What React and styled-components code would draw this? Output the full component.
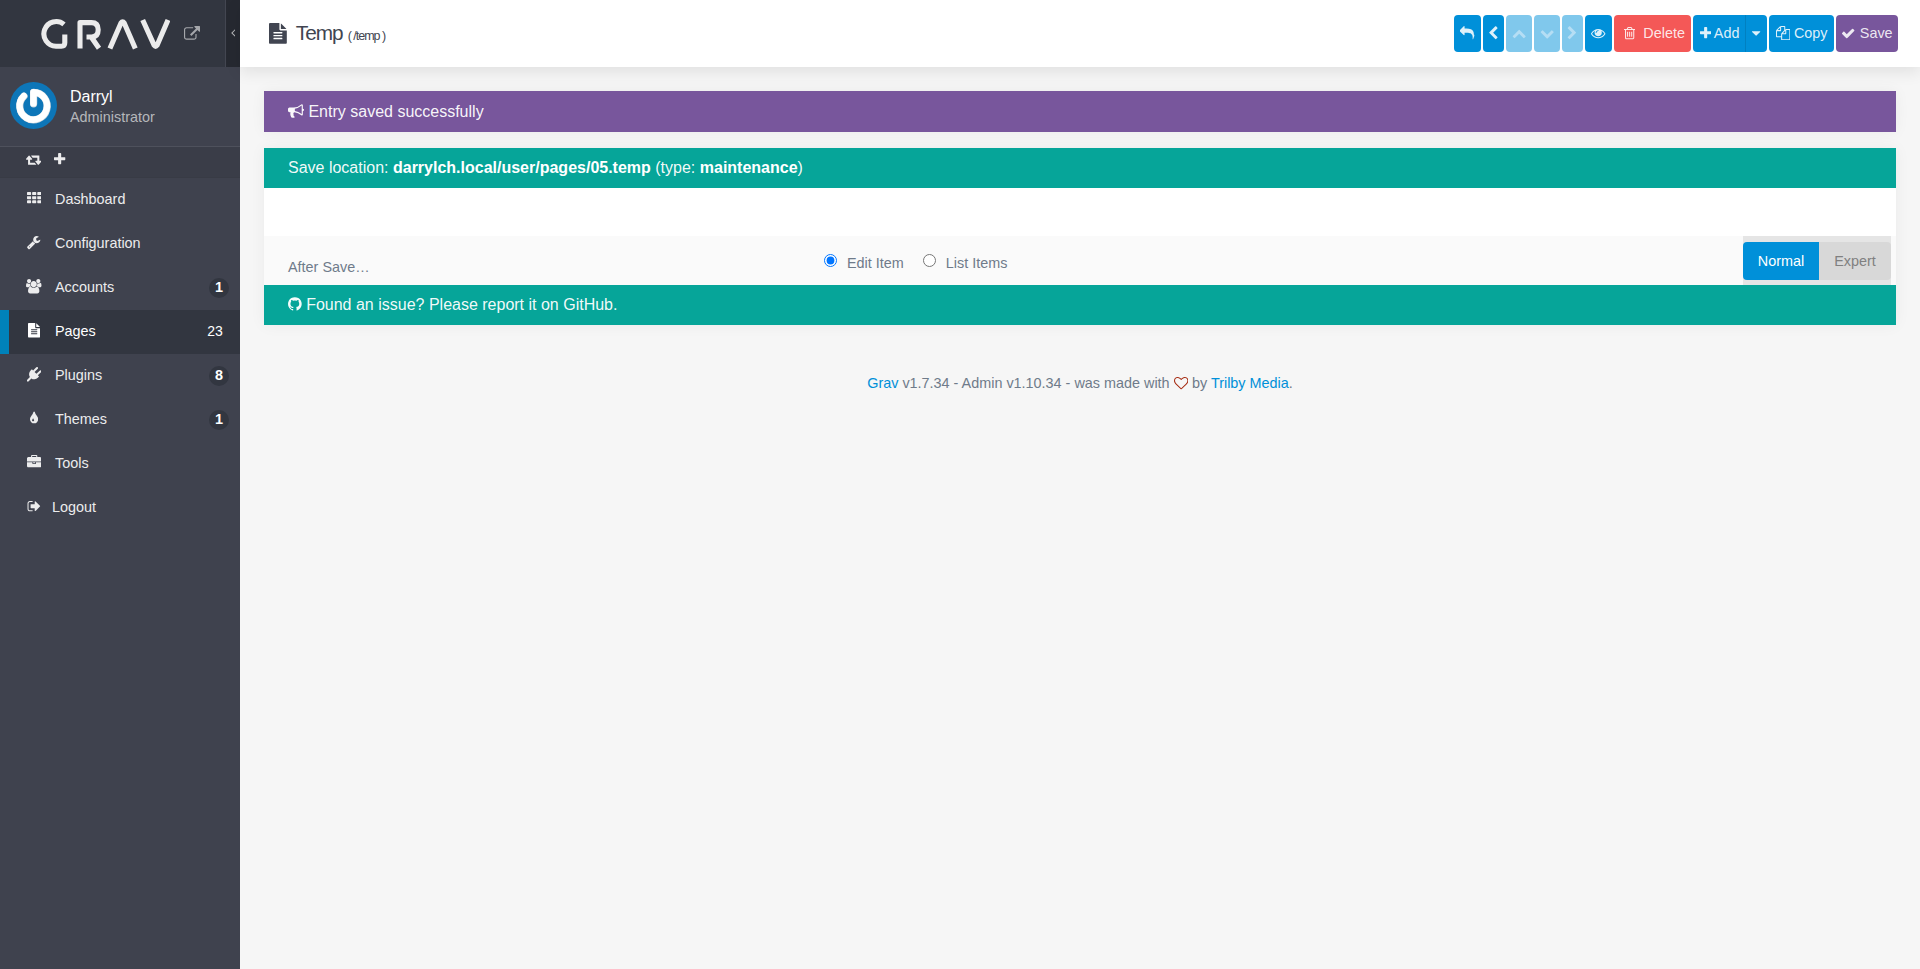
import React from 'react'
import styled, { createGlobalStyle, css } from 'styled-components'

const GlobalStyle = createGlobalStyle`
  * {
    box-sizing: border-box;
  }
  body {
    margin: 0;
    background: #f6f6f6;
    color: #6f7b8a;
    font-family: "Liberation Sans", Arial, sans-serif;
    font-size: 16px;
    line-height: 24px;
  }
`

// x offset, advance width and outline of each icon, on a 1792 unit em
const ICONS = {
  reply: [0, 1792, 'M1792 1120q0 166-127 451-3 7-10.5 24t-13.5 30-13 22q-12 17-28 17-15 0-23.5-10t-8.5-25q0-9 2.5-26.5t2.5-23.5q5-68 5-123 0-112-19.5-200.5t-54-153.5-89-112-117-77-145.5-47-167.5-24-189.5-7h-224v256q0 26-19 45t-45 19-45-19l-512-512q-19-19-19-45t19-45l512-512q19-19 45-19t45 19 19 45v256h224q713 0 875 403 53 134 53 333z'],
  left: [256, 1280, 'M1427 301l-531 531 531 531q19 19 19 45t-19 45l-166 166q-19 19-45 19t-45-19l-742-742q-19-19-19-45t19-45l742-742q19-19 45-19t45 19l166 166q19 19 19 45t-19 45z'],
  right: [256, 1280, 'M1363 877l-742 742q-19 19-45 19t-45-19l-166-166q-19-19-19-45t19-45l531-531-531-531q-19-19-19-45t19-45l166-166q19-19 45-19t45 19l742 742q19 19 19 45t-19 45z'],
  down: [0, 1792, 'M1683 808l-742 741q-19 19-45 19t-45-19l-742-741q-19-19-19-45.5t19-45.5l166-165q19-19 45-19t45 19l531 531 531-531q19-19 45-19t45 19l166 165q19 19 19 45.5t-19 45.5z'],
  up: [0, 1792, 'M1683 1331l-166 165q-19 19-45 19t-45-19l-531-531-531 531q-19 19-45 19t-45-19l-166-165q-19-19-19-45.5t19-45.5l742-741q19-19 45-19t45 19l742 741q19 19 19 45.5t-19 45.5z'],
  eye: [0, 1792, 'M1664 960q-152-236-381-353 61 104 61 225 0 185-131.5 316.5t-316.5 131.5-316.5-131.5-131.5-316.5q0-121 61-225-229 117-381 353 133 205 333.5 326.5t434.5 121.5 434.5-121.5 333.5-326.5zm-720-384q0-20-14-34t-34-14q-125 0-214.5 89.5t-89.5 214.5q0 20 14 34t34 14 34-14 14-34q0-86 61-147t147-61q20 0 34-14t14-34zm848 384q0 34-20 69-140 230-376.5 368.5t-499.5 138.5-499.5-139-376.5-368q-20-35-20-69t20-69q140-229 376.5-368t499.5-139 499.5 139 376.5 368q20 35 20 69z'],
  trash: [192, 1408, 'M704 736v576q0 14-9 23t-23 9h-64q-14 0-23-9t-9-23v-576q0-14 9-23t23-9h64q14 0 23 9t9 23zm256 0v576q0 14-9 23t-23 9h-64q-14 0-23-9t-9-23v-576q0-14 9-23t23-9h64q14 0 23 9t9 23zm256 0v576q0 14-9 23t-23 9h-64q-14 0-23-9t-9-23v-576q0-14 9-23t23-9h64q14 0 23 9t9 23zm128 724v-948h-896v948q0 22 7 40.5t14.5 27 10.5 8.5h832q3 0 10.5-8.5t14.5-27 7-40.5zm-672-1076h448l-48-117q-7-9-17-11h-317q-10 2-17 11zm928 32v64q0 14-9 23t-23 9h-96v948q0 83-47 143.5t-113 60.5h-832q-66 0-113-58.5t-47-141.5v-952h-96q-14 0-23-9t-9-23v-64q0-14 9-23t23-9h309l70-167q15-37 54-63t79-26h320q40 0 79 26t54 63l70 167h309q14 0 23 9t9 23z'],
  plus: [192, 1408, 'M1600 736v192q0 40-28 68t-68 28h-416v416q0 40-28 68t-68 28h-192q-40 0-68-28t-28-68v-416h-416q-40 0-68-28t-28-68v-192q0-40 28-68t68-28h416v-416q0-40 28-68t68-28h192q40 0 68 28t28 68v416h416q40 0 68 28t28 68z'],
  caret: [384, 1024, 'M1408 704q0 26-19 45l-448 448q-19 19-45 19t-45-19l-448-448q-19-19-19-45t19-45 45-19h896q26 0 45 19t19 45z'],
  copy: [0, 1792, 'M1696 384q40 0 68 28t28 68v1216q0 40-28 68t-68 28h-960q-40 0-68-28t-28-68v-288h-544q-40 0-68-28t-28-68v-672q0-40 20-88t48-76l408-408q28-28 76-48t88-20h416q40 0 68 28t28 68v328q68-40 128-40h416zm-544 213l-299 299h299v-299zm-640-384l-299 299h299v-299zm196 647l316-316v-416h-384v416q0 40-28 68t-68 28h-416v640h512v-256q0-40 20-88t48-76zm956 804v-1152h-384v416q0 40-28 68t-68 28h-416v640h896z'],
  check: [0, 1792, 'M1671 566q0 40-28 68l-724 724-136 136q-28 28-68 28t-68-28l-136-136-362-362q-28-28-28-68t28-68l136-136q28-28 68-28t68 28l294 295 656-657q28-28 68-28t68 28l136 136q28 28 28 68z'],
  external: [0, 1792, 'M1408 928v320q0 119-84.5 203.5t-203.5 84.5h-832q-119 0-203.5-84.5t-84.5-203.5v-832q0-119 84.5-203.5t203.5-84.5h704q14 0 23 9t9 23v64q0 14-9 23t-23 9h-704q-66 0-113 47t-47 113v832q0 66 47 113t113 47h832q66 0 113-47t47-113v-320q0-14 9-23t23-9h64q14 0 23 9t9 23zm384-864v512q0 26-19 45t-45 19-45-19l-176-176-652 652q-10 10-23 10t-23-10l-114-114q-10-10-10-23t10-23l652-652-176-176q-19-19-19-45t19-45 45-19h512q26 0 45 19t19 45z'],
  retweet: [-64, 1920, 'M1216 1568q0 13-9.5 22.5t-22.5 9.5h-960q-8 0-13.5-2t-9-7-5.5-8-3-11.5-1-11.5v-600h-192q-26 0-45-19t-19-45q0-24 15-41l320-384q19-22 49-22t49 22l320 384q15 17 15 41 0 26-19 45t-45 19h-192v384h576q16 0 25 11l160 192q7 10 7 21zm640-416q0 24-15 41l-320 384q-20 23-49 23t-49-23l-320-384q-15-17-15-41 0-26 19-45t45-19h192v-384h-576q-16 0-25-12l-160-192q-7-9-7-20 0-13 9.5-22.5t22.5-9.5h960q8 0 13.5 2t9 7 5.5 8 3 11.5 1 11.5v600h192q26 0 45 19t19 45z'],
  th: [0, 1792, [1152, 640, 128].map(y => [0, 640, 1280].map(x => `M${x + 512} ${y + 96}v192q0 40-28 68t-68 28h-320q-40 0-68-28t-28-68v-192q0-40 28-68t68-28h320q40 0 68 28t28 68z`).join('')).join('')],
  wrench: [64, 1664, 'M448 1472q0-26-19-45t-45-19-45 19-19 45 19 45 45 19 45-19 19-45zm644-420l-682 682q-37 37-90 37-52 0-91-37l-106-108q-38-36-38-90 0-53 38-91l681-681q39 98 114.5 173.5t173.5 114.5zm634-435q0 39-23 106-47 134-164.5 217.5t-258.5 83.5q-185 0-316.5-131.5t-131.5-316.5 131.5-316.5 316.5-131.5q58 0 121.5 16.5t107.5 46.5q16 11 16 28t-16 28l-293 169v224l193 107q5-3 79-48.5t135.5-81 70.5-35.5q15 0 23.5 10t8.5 25z'],
  users: [0, 1920, 'M593 896q-162 5-265 128h-134q-82 0-138-40.5t-56-118.5q0-353 124-353 6 0 43.5 21t97.5 42.5 119 21.5q67 0 133-23-5 37-5 66 0 159 93 293zm1071 637q0 120-73 189.5t-194 69.5h-874q-121 0-194-69.5t-73-189.5q0-53 3.5-103.5t14-109 26.5-108.5 43-97.5 62-81 85.5-53.5 111.5-20q10 0 43 21.5t73 48 107 48 135 21.5 135-21.5 107-48 73-48 43-21.5q61 0 111.5 20t85.5 53.5 62 81 43 97.5 26.5 108.5 14 109 3.5 103.5zm-1024-1277q0 106-75 181t-181 75-181-75-75-181 75-181 181-75 181 75 75 181zm704 384q0 159-112.5 271.5t-271.5 112.5-271.5-112.5-112.5-271.5 112.5-271.5 271.5-112.5 271.5 112.5 112.5 271.5zm576 225q0 78-56 118.5t-138 40.5h-134q-103-123-265-128 93-134 93-293 0-29-5-66 66 23 133 23 59 0 119-21.5t97.5-42.5 43.5-21q124 0 124 353zm-128-609q0 106-75 181t-181 75-181-75-75-181 75-181 181-75 181 75 75 181z'],
  file: [128, 1536, 'M1596 476q14 14 28 36h-472v-472q22 14 36 28zm-476 164h544v1056q0 40-28 68t-68 28h-1344q-40 0-68-28t-28-68v-1600q0-40 28-68t68-28h800v544q0 40 28 68t68 28zm160 736v-64q0-14-9-23t-23-9h-704q-14 0-23 9t-9 23v64q0 14 9 23t23 9h704q14 0 23-9t9-23zm0-256v-64q0-14-9-23t-23-9h-704q-14 0-23 9t-9 23v64q0 14 9 23t23 9h704q14 0 23-9t9-23zm0-256v-64q0-14-9-23t-23-9h-704q-14 0-23 9t-9 23v64q0 14 9 23t23 9h704q14 0 23-9t9-23z'],
  plug: [0, 1792, 'M1755 453q37 38 37 90.5t-37 90.5l-401 400 150 150-160 160q-163 163-389.5 186.5t-411.5-100.5l-362 362h-181v-181l362-362q-124-185-100.5-411.5t186.5-389.5l160-160 150 150 400-401q38-37 91-37t90 37 37 90.5-37 90.5l-400 401 234 234 401-400q38-37 91-37t90 37z'],
  tint: [384, 1024, 'M896 1152q0-36-20-69-1-1-15.5-22.5t-25.5-38-25-44-21-50.5q-4-16-21-16t-21 16q-7 23-21 50.5t-25 44-25.5 38-15.5 22.5q-20 33-20 69 0 53 37.5 90.5t90.5 37.5 90.5-37.5 37.5-90.5zm512-128q0 212-150 362t-362 150-362-150-150-362q0-145 81-275 6-9 62.5-90.5t101-151 99.5-178 83-201.5q9-30 34-47t51-17 51.5 17 33.5 47q28 93 83 201.5t99.5 178 101 151 62.5 90.5q81 127 81 275z'],
  briefcase: [0, 1792, 'M640 256h512v-128h-512v128zm1152 640v480q0 66-47 113t-113 47h-1472q-66 0-113-47t-47-113v-480h672v160q0 26 19 45t45 19h320q26 0 45-19t19-45v-160h672zm-768 0v128h-256v-128h256zm768-480v384h-1792v-384q0-66 47-113t113-47h352v-160q0-40 28-68t68-28h576q40 0 68 28t28 68v160h352q66 0 113 47t47 113z'],
  signout: [0, 1664, 'M704 1440q0 4 1 20t.5 26.5-3 23.5-10 19.5-20.5 6.5h-320q-119 0-203.5-84.5t-84.5-203.5v-704q0-119 84.5-203.5t203.5-84.5h320q13 0 22.5 9.5t9.5 22.5q0 4 1 20t.5 26.5-3 23.5-10 19.5-20.5 6.5h-320q-66 0-113 47t-47 113v704q0 66 47 113t113 47h312l11.5 1 11.5 3 8 5.5 7 9 2 13.5zm928-544q0 26-19 45l-544 544q-19 19-45 19t-45-19-19-45v-288h-448q-26 0-45-19t-19-45v-384q0-26 19-45t45-19h448v-288q0-26 19-45t45-19 45 19l544 544q19 19 19 45z'],
  bullhorn: [0, 1792, 'M1664 640q53 0 90.5 37.5t37.5 90.5-37.5 90.5-90.5 37.5v384q0 52-38 90t-90 38q-417-347-812-380-58 19-91 66t-31 100.5 40 92.5q-20 33-23 65.5t6 58 33.5 55 48 50 61.5 50.5q-29 58-111.5 83t-168.5 11.5-132-55.5q-7-23-29.5-87.5t-32-94.5-23-89-15-101 3.5-98.5 22-110.5h-122q-66 0-113-47t-47-113v-192q0-66 47-113t113-47h480q435 0 896-384 52 0 90 38t38 90v384zm-128 604v-954q-394 302-768 343v270q377 42 768 341z'],
  github: [128, 1536, 'M896 128q209 0 385.5 103t279.5 279.5 103 385.5q0 251-146.5 451.5t-378.5 277.5q-27 5-40-7t-13-30q0-3 .5-76.5t.5-134.5q0-97-52-142 57-6 102.5-18t94-39 81-66.5 53-105 20.5-150.5q0-119-79-206 37-91-8-204-28-9-81 11t-92 44l-38 24q-93-26-192-26t-192 26q-16-11-42.5-27t-83.5-38.5-85-13.5q-45 113-8 204-79 87-79 206 0 85 20.5 150t52.5 105 80.5 67 94 39 102.5 18q-39 36-49 103-21 10-45 15t-57 5-65.5-21.5-55.5-62.5q-19-32-48.5-52t-49.5-24l-20-3q-21 0-29 4.5t-5 11.5 9 14 13 12l7 5q22 10 43.5 38t31.5 51l10 23q13 38 44 61.5t67 30 69.5 7 55.5-3.5l23-4q0 38 .5 88.5t.5 54.5q0 18-13 30t-40 7q-232-77-378.5-277.5t-146.5-451.5q0-209 103-385.5t279.5-279.5 385.5-103z'],
  heart: [0, 1792, 'M1664 596q0-81-21.5-143t-55-98.5-81.5-59.5-94-31-98-8-112 25.5-110.5 64-86.5 72-60 61.5q-18 22-49 22t-49-22q-24-28-60-61.5t-86.5-72-110.5-64-112-25.5-98 8-94 31-81.5 59.5-55 98.5-21.5 143q0 168 187 355l581 560 580-559q188-188 188-356zm128 0q0 221-229 450l-623 600q-18 18-44 18t-44-18l-624-602q-10-8-27.5-26t-55.5-65.5-68-97.5-53.5-121-23.5-138q0-220 127-344t351-124q62 0 126.5 21.5t120 58 95.5 68.5 76 68q36-36 76-68t95.5-68.5 120-58 126.5-21.5q224 0 351 124t127 344z'],
  angle: [576, 640, 'M1203 544q0 13-10 23l-393 393 393 393q10 10 10 23t-10 23l-50 50q-10 10-23 10t-23-10l-466-466q-10-10-10-23t10-23l466-466q10-10 23-10t23 10l50 50q10 10 10 23z']
}

const Svg = styled.svg`
  display: inline-block;
  flex: none;
  height: 1em;
  fill: currentColor;
  vertical-align: -0.143em;
`

const Icon = ({ name, ...rest }) => {
  const [x, width, d] = ICONS[name]
  return (
    <Svg viewBox={`${x} 0 ${width} 1792`} {...rest}>
      <path d={d} />
    </Svg>
  )
}

const Page = styled.div`
  display: flex;
  height: 969px;
  overflow: hidden;
`

const Sidebar = styled.aside`
  display: flex;
  flex-direction: column;
  flex: none;
  width: 240px;
  background: #3f424e;
  color: #ececed;
  font-size: 14.4px;
`

const Brand = styled.div`
  display: flex;
  height: 67px;
  background: #323640;
`

const BrandLink = styled.div`
  display: flex;
  flex: 1;
  align-items: center;
  gap: 14px;
  padding-left: 40px;
  color: #a5a7ab;
  font-size: 16px;
`

const LogoSvg = styled.svg`
  flex: none;
  width: 130px;
  height: 32px;
  fill: none;
  stroke: #ebebeb;
  stroke-width: 5.1;
  stroke-linejoin: round;
`

const Collapse = styled.div`
  display: flex;
  align-items: center;
  justify-content: center;
  width: 15px;
  padding-bottom: 2px;
  border-left: 1px solid #434651;
  background: #262931;
  color: #b3b4b7;
  font-size: 13px;
`

const Profile = styled.div`
  display: flex;
  gap: 13px;
  height: 80px;
  padding: 15px 10px 0;
  border-bottom: 1px solid #4e515c;
`

const AvatarSvg = styled.svg`
  width: 47px;
  height: 47px;
`

const Names = styled.div`
  padding-top: 3px;
`

const Name = styled.div`
  color: #fff;
  font-size: 16px;
  line-height: 24px;
`

const Role = styled.div`
  color: #b5b7bb;
  line-height: 17px;
`

const QuickTray = styled.div`
  display: flex;
  align-items: center;
  gap: 13px;
  height: 31px;
  padding: 0 0 5px 26px;
  border-bottom: 1px solid #383b45;
  background: #3a3d48;
`

const NavRow = styled.div`
  display: flex;
  align-items: center;
  height: 44px;
  padding: 0 11px 3px ${p => p.active ? 17 : 26}px;
  ${p => p.active && css`
    border-left: 9px solid #0082ba;
    background: #323640;
    color: #fff;
  `}
`

const NavIcon = styled.span`
  display: flex;
  justify-content: center;
  width: 16px;
  margin-right: ${p => p.tight ? 10 : 13}px;
`

const NavLabel = styled.span`
  flex: 1;
`

const Badge = styled.span`
  margin-top: 3px;
  min-width: 20px;
  height: 20px;
  border-radius: 10px;
  background: #323640;
  color: #fff;
  font-weight: 700;
  line-height: 19px;
  text-align: center;
  ${p => p.plain && css`
    margin-right: 4px;
    background: none;
    font-weight: 400;
    font-size: 14px;
    line-height: 18px;
  `}
`

const Main = styled.main`
  flex: 1;
  min-width: 0;
`

const TitleBar = styled.header`
  position: relative;
  display: flex;
  align-items: center;
  justify-content: space-between;
  height: 67px;
  padding: 0 22px 0 29px;
  background: #fff;
  box-shadow: 0 5px 15px rgba(0, 0, 0, 0.09);
`

const Title = styled.h1`
  display: flex;
  align-items: baseline;
  margin: 2px 0 0;
  color: #414551;
  font-size: 20.8px;
  font-weight: 400;
  letter-spacing: -1px;
  ${Svg} {
    align-self: center;
    margin: -2px 9px 0 0;
  }
`

const Route = styled.span`
  margin-left: 5px;
  font-size: 12.5px;
  letter-spacing: -1px;
`

const Toolbar = styled.div`
  display: flex;
  gap: 2px;
`

const BUTTON_COLORS = {
  blue: '#0090d9',
  red: '#f45857',
  purple: '#78569c'
}

const Button = styled.button`
  display: flex;
  align-items: center;
  justify-content: center;
  gap: ${p => p.gap || 3}px;
  width: ${p => p.w}px;
  height: 37px;
  padding: 0 0 1px ${p => p.inset || 0}px;
  border: 0;
  border-radius: 4px;
  background: ${p => BUTTON_COLORS[p.tone || 'blue']};
  color: rgba(255, 255, 255, 0.87);
  font: 14.4px "Liberation Sans", Arial, sans-serif;
  ${p => p.faded && css`
    background: #80c8ec;
    color: #b5def4;
  `}
`

const SplitButton = styled.div`
  display: flex;
  ${Button}:first-child {
    border-radius: 4px 0 0 4px;
  }
  ${Button}:last-child {
    border-left: 1px solid #0080c1;
    border-radius: 0 4px 4px 0;
  }
`

const Content = styled.div`
  padding: 24px 24px 0;
`

const Banner = styled.div`
  height: ${p => p.h || 40}px;
  padding: 0 24px;
  background: ${p => p.tone === 'purple' ? '#78569c' : '#06a599'};
  color: rgba(255, 255, 255, 0.96);
  line-height: ${p => p.lh || 40}px;
  b {
    color: #fff;
  }
`

const Shadowed = styled.div`
  margin-bottom: ${p => p.space || 0}px;
  box-shadow: 0 0 15px rgba(0, 0, 0, 0.05);
`

const Blank = styled.div`
  height: 48px;
  background: #fff;
`

const SaveRow = styled.div`
  display: flex;
  height: 49px;
  padding: 0 5px 0 24px;
  background: #fafafa;
  font-size: 14.4px;
`

const SaveLabel = styled.div`
  width: 534px;
  padding-top: 19px;
`

const Options = styled.div`
  display: flex;
  flex: 1;
  gap: 17px;
`

const Option = styled.label`
  display: flex;
  gap: 10px;
  padding-top: 15px;
  input {
    width: 13px;
    height: 13px;
    margin: 3px 0 0 2px;
  }
`

const ModeSwitch = styled.div`
  display: flex;
  padding: 6px 0 5px;
  background: #e5e5e5;
`

const Mode = styled.div`
  width: ${p => p.w}px;
  border-radius: ${p => p.on ? '4px 0 0 4px' : '0 4px 4px 0'};
  background: ${p => p.on ? '#0090d9' : '#d8d8d8'};
  color: ${p => p.on ? '#fff' : '#808080'};
  line-height: 38px;
  text-align: center;
`

const Footer = styled.footer`
  padding-top: 46px;
  font-size: 14.4px;
  text-align: center;
  a {
    color: #0090d9;
  }
`

const Heart = styled.span`
  color: #a5290f;
`

const Logo = () => (
  <LogoSvg viewBox="40 18 130 32">
    <path d="M64 24.4A12.3 12.3 0 1 0 56 46.2H61.5Q64.8 46.2 64.8 42.8V34.6" />
    <path d="M80 48.5V22.6H91.5Q98.2 22.6 98.2 29.8T91.5 37H86.5M91.2 37L99 48.2" />
    <path d="M109.9 48.6L121 22.9Q122.6 20.6 124.2 22.9L135.3 48.6" />
    <path d="M142.7 20L154.2 45.4Q155.6 47.4 157 45.4L168 20" />
  </LogoSvg>
)

const Avatar = () => (
  <AvatarSvg viewBox="0 0 47 47">
    <circle cx="23.5" cy="23.5" r="23.5" fill="#0d76b8" />
    <g fill="none" strokeLinecap="round" strokeLinejoin="round">
      <path d="M23.6 21.8V10.4A13.7 13.7 0 1 1 14 14.2" stroke="#c9d3da" strokeWidth="7.2" />
      <path d="M23.4 21.4V10.2A13.7 13.7 0 1 1 13.8 14" stroke="#fff" strokeWidth="6.4" />
    </g>
  </AvatarSvg>
)

const NAV = [
  { icon: 'th', label: 'Dashboard' },
  { icon: 'wrench', label: 'Configuration' },
  { icon: 'users', label: 'Accounts', count: 1 },
  { icon: 'file', label: 'Pages', count: 23, active: true },
  { icon: 'plug', label: 'Plugins', count: 8 },
  { icon: 'tint', label: 'Themes', count: 1 },
  { icon: 'briefcase', label: 'Tools' },
  { icon: 'signout', label: 'Logout', tight: true }
]

export default function App() {
  return (
    <Page>
      <GlobalStyle />
      <Sidebar>
        <Brand>
          <BrandLink>
            <Logo />
            <Icon name="external" />
          </BrandLink>
          <Collapse><Icon name="angle" /></Collapse>
        </Brand>
        <Profile>
          <Avatar />
          <Names>
            <Name>Darryl</Name>
            <Role>Administrator</Role>
          </Names>
        </Profile>
        <QuickTray>
          <Icon name="retweet" />
          <Icon name="plus" />
        </QuickTray>
        {
          NAV.map(({ icon, label, count, active, tight }) =>
            <NavRow key={label} active={active}>
              <NavIcon tight={tight}><Icon name={icon} /></NavIcon>
              <NavLabel>{label}</NavLabel>
              {count && <Badge plain={active}>{count}</Badge>}
            </NavRow>
          )
        }
      </Sidebar>
      <Main>
        <TitleBar>
          <Title>
            <Icon name="file" />
            Temp
            <Route>( /temp )</Route>
          </Title>
          <Toolbar>
            <Button w={27}><Icon name="reply" /></Button>
            <Button w={21}><Icon name="left" /></Button>
            <Button w={26} faded><Icon name="up" /></Button>
            <Button w={26} faded><Icon name="down" /></Button>
            <Button w={21} faded><Icon name="right" /></Button>
            <Button w={27}><Icon name="eye" /></Button>
            <Button w={77} tone="red" gap={8} inset={4}><Icon name="trash" />Delete</Button>
            <SplitButton>
              <Button w={52} inset={1}><Icon name="plus" />Add</Button>
              <Button w={22}><Icon name="caret" /></Button>
            </SplitButton>
            <Button w={65} gap={4}><Icon name="copy" />Copy</Button>
            <Button w={62} gap={4} tone="purple"><Icon name="check" />Save</Button>
          </Toolbar>
        </TitleBar>
        <Content>
          <Shadowed space={16}>
            <Banner tone="purple" h={41} lh={42}><Icon name="bullhorn" /> Entry saved successfully</Banner>
          </Shadowed>
          <Shadowed>
            <Banner>Save location: <b>darrylch.local/user/pages/05.temp</b> (type: <b>maintenance</b>)</Banner>
            <Blank />
            <SaveRow>
              <SaveLabel>After Save…</SaveLabel>
              <Options>
                <Option><input type="radio" name="after" defaultChecked />Edit Item</Option>
                <Option><input type="radio" name="after" />List Items</Option>
              </Options>
              <ModeSwitch>
                <Mode w={76} on>Normal</Mode>
                <Mode w={72}>Expert</Mode>
              </ModeSwitch>
            </SaveRow>
            <Banner><Icon name="github" /> Found an issue? Please report it on GitHub.</Banner>
          </Shadowed>
          <Footer>
            <a>Grav</a> v1.7.34 - Admin v1.10.34 - was made with <Heart><Icon name="heart" /></Heart> by <a>Trilby Media</a>.
          </Footer>
        </Content>
      </Main>
    </Page>
  )
}
